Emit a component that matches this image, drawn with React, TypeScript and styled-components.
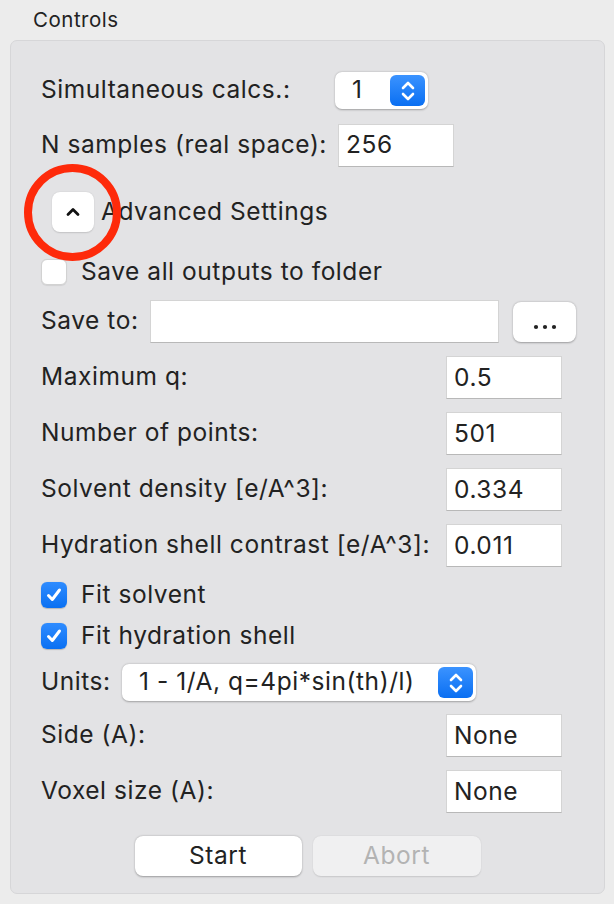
import React from "react";
import styled, { createGlobalStyle } from "styled-components";

const Global = createGlobalStyle`
  html, body { margin: 0; padding: 0; background: #ececec; }
  body { font-family: Inter, "Liberation Sans", sans-serif; color: #222; }
`;

const Page = styled.div`
  width: 614px;
  height: 904px;
  box-sizing: border-box;
  padding: 8px 9px 10px 10px;
  display: flex;
  flex-direction: column;
  background: #ececec;
`;

const Title = styled.div`
  font-size: 20.5px;
  letter-spacing: 0.5px;
  line-height: 24px;
  padding-left: 23px;
  height: 32px;
  color: #222;
`;

const Group = styled.div`
  flex: 1;
  box-sizing: border-box;
  background: #e3e3e5;
  border: 1px solid #d6d6d8;
  border-radius: 7px;
  padding: 29px 20px 0 30px;
  display: flex;
  flex-direction: column;
  position: relative;
`;

const Row = styled.div<{ $h: number; $mt?: number }>`
  display: flex;
  align-items: center;
  height: ${(p) => p.$h}px;
  margin-top: ${(p) => p.$mt ?? 13}px;
  font-size: 24.5px;
  letter-spacing: 0.55px;
  white-space: nowrap;
`;

const Label = styled.div<{ $w?: number }>`
  width: ${(p) => (p.$w ? `${p.$w}px` : "auto")};
  flex: none;
  padding-bottom: 3px;
`;

const TextInput = styled.div<{ $w: number }>`
  width: ${(p) => p.$w}px;
  height: 43px;
  box-sizing: border-box;
  background: #fff;
  border: 1px solid #d4d4d4;
  border-bottom-color: #b8b8b8;
  display: flex;
  align-items: center;
  padding: 0 0 2px 7px;
  color: #222;
`;

const Combo = styled.div<{ $w: number }>`
  width: ${(p) => p.$w}px;
  height: 37px;
  box-sizing: border-box;
  background: #fff;
  border-radius: 7px;
  box-shadow: 0 0.5px 2px rgba(0, 0, 0, 0.3);
  display: flex;
  align-items: center;
  justify-content: space-between;
  padding: 0 3px 0 17px;
`;

const ComboText = styled.span`
  padding-bottom: 3px;
`;

const Stepper = styled.div`
  width: 35px;
  height: 31px;
  border-radius: 6px;
  background: linear-gradient(#3b93ff, #0a6ff2);
  display: flex;
  align-items: center;
  justify-content: center;
  flex: none;
`;

const PushButton = styled.div<{ $w: number; $disabled?: boolean }>`
  width: ${(p) => p.$w}px;
  height: 40px;
  box-sizing: border-box;
  border-radius: 8px;
  background: ${(p) => (p.$disabled ? "#f0f0f1" : "#fff")};
  color: ${(p) => (p.$disabled ? "#b3b3b3" : "#222")};
  box-shadow: ${(p) =>
    p.$disabled ? "0 0.5px 1.5px rgba(0,0,0,0.12)" : "0 0.5px 2px rgba(0,0,0,0.32)"};
  display: flex;
  align-items: center;
  justify-content: center;
  padding-bottom: 2px;
  font-size: 24.5px;
  letter-spacing: 0.55px;
`;

const DotsButton = styled(PushButton)`
  align-items: flex-end;
  padding-bottom: 12px;
`;

const Check = styled.div<{ $on?: boolean }>`
  width: 26px;
  height: 26px;
  box-sizing: border-box;
  border-radius: 6px;
  flex: none;
  margin-right: 14px;
  display: flex;
  align-items: center;
  justify-content: center;
  background: ${(p) => (p.$on ? "linear-gradient(#2f8cff, #0a70f2)" : "#fff")};
  border: ${(p) => (p.$on ? "none" : "1px solid #d2d2d2")};
  box-shadow: ${(p) => (p.$on ? "0 0.5px 1px rgba(0,0,0,0.2)" : "0 0.5px 1px rgba(0,0,0,0.08)")};
`;

const Disclosure = styled.div`
  width: 42px;
  height: 40px;
  border-radius: 8px;
  background: #fff;
  box-shadow: 0 0.5px 1.5px rgba(0, 0, 0, 0.15);
  margin-left: 11px;
  margin-right: 7px;
  display: flex;
  align-items: center;
  justify-content: center;
  flex: none;
`;

const Highlight = styled.div`
  position: absolute;
  left: 13px;
  top: 123px;
  width: 97px;
  height: 97px;
  box-sizing: border-box;
  border: 8px solid #fe2a0a;
  border-radius: 50%;
  pointer-events: none;
`;

const ButtonBar = styled.div`
  display: flex;
  justify-content: center;
  gap: 11px;
  margin-top: 23px;
  margin-left: -10px;
`;

const Field = styled.div<{ $ml?: number }>`
  margin-left: ${(p) => p.$ml ?? 0}px;
  display: flex;
`;

const StepIcon = () => (
  <svg width="16" height="22" viewBox="0 0 16 22">
    <path d="M3 8 L8 3 L13 8" fill="none" stroke="#fff" strokeWidth="2.6" strokeLinecap="round" strokeLinejoin="round" />
    <path d="M3 14 L8 19 L13 14" fill="none" stroke="#fff" strokeWidth="2.6" strokeLinecap="round" strokeLinejoin="round" />
  </svg>
);

const CheckIcon = () => (
  <svg width="18" height="18" viewBox="0 0 18 18">
    <path d="M3.5 9.5 L7.3 13.5 L14.5 4" fill="none" stroke="#fff" strokeWidth="3" strokeLinecap="round" strokeLinejoin="round" />
  </svg>
);

const ChevronUp = () => (
  <svg width="16" height="12" viewBox="0 0 16 12">
    <path d="M3 8.5 L8 3.5 L13 8.5" fill="none" stroke="#111" strokeWidth="2.8" strokeLinecap="round" strokeLinejoin="round" />
  </svg>
);

const Dots = () => (
  <svg width="24" height="6" viewBox="0 0 24 6">
    <circle cx="3" cy="3" r="2.1" fill="#222" />
    <circle cx="12" cy="3" r="2.1" fill="#222" />
    <circle cx="21" cy="3" r="2.1" fill="#222" />
  </svg>
);

const numberRows: [string, string][] = [
  ["Maximum q:", "0.5"],
  ["Number of points:", "501"],
  ["Solvent density [e/A^3]:", "0.334"],
  ["Hydration shell contrast [e/A^3]:", "0.011"],
];

export default function App() {
  return (
    <>
      <Global />
      <Page>
        <Title>Controls</Title>
        <Group>
          <Highlight />
          <Row $h={41} $mt={0}>
            <Label $w={294}>Simultaneous calcs.:</Label>
            <Combo $w={93}>
              <ComboText>1</ComboText>
              <Stepper>
                <StepIcon />
              </Stepper>
            </Combo>
          </Row>
          <Row $h={42} $mt={13}>
            <Label $w={297}>N samples (real space):</Label>
            <TextInput $w={116}>256</TextInput>
          </Row>
          <Row $h={40} $mt={26}>
            <Disclosure>
              <ChevronUp />
            </Disclosure>
            <Label>Advanced Settings</Label>
          </Row>
          <Row $h={26} $mt={27}>
            <Check />
            <Label>Save all outputs to folder</Label>
          </Row>
          <Row $h={43} $mt={15}>
            <Label $w={109}>Save to:</Label>
            <TextInput $w={349} />
            <Field $ml={14}>
              <DotsButton $w={63}>
                <Dots />
              </DotsButton>
            </Field>
          </Row>
          {numberRows.map(([l, v]) => (
            <Row key={l} $h={43} $mt={13}>
              <Label $w={405}>{l}</Label>
              <TextInput $w={116}>{v}</TextInput>
            </Row>
          ))}
          <Row $h={26} $mt={15}>
            <Check $on>
              <CheckIcon />
            </Check>
            <Label>Fit solvent</Label>
          </Row>
          <Row $h={26} $mt={15}>
            <Check $on>
              <CheckIcon />
            </Check>
            <Label>Fit hydration shell</Label>
          </Row>
          <Row $h={39} $mt={14}>
            <Label $w={81}>Units:</Label>
            <Combo $w={354}>
              <ComboText>1 - 1/A, q=4pi*sin(th)/l)</ComboText>
              <Stepper>
                <StepIcon />
              </Stepper>
            </Combo>
          </Row>
          <Row $h={43} $mt={12}>
            <Label $w={405}>Side (A):</Label>
            <TextInput $w={116}>None</TextInput>
          </Row>
          <Row $h={43} $mt={13}>
            <Label $w={405}>Voxel size (A):</Label>
            <TextInput $w={116}>None</TextInput>
          </Row>
          <ButtonBar>
            <PushButton $w={167}>Start</PushButton>
            <PushButton $w={168} $disabled>
              Abort
            </PushButton>
          </ButtonBar>
        </Group>
      </Page>
    </>
  );
}
